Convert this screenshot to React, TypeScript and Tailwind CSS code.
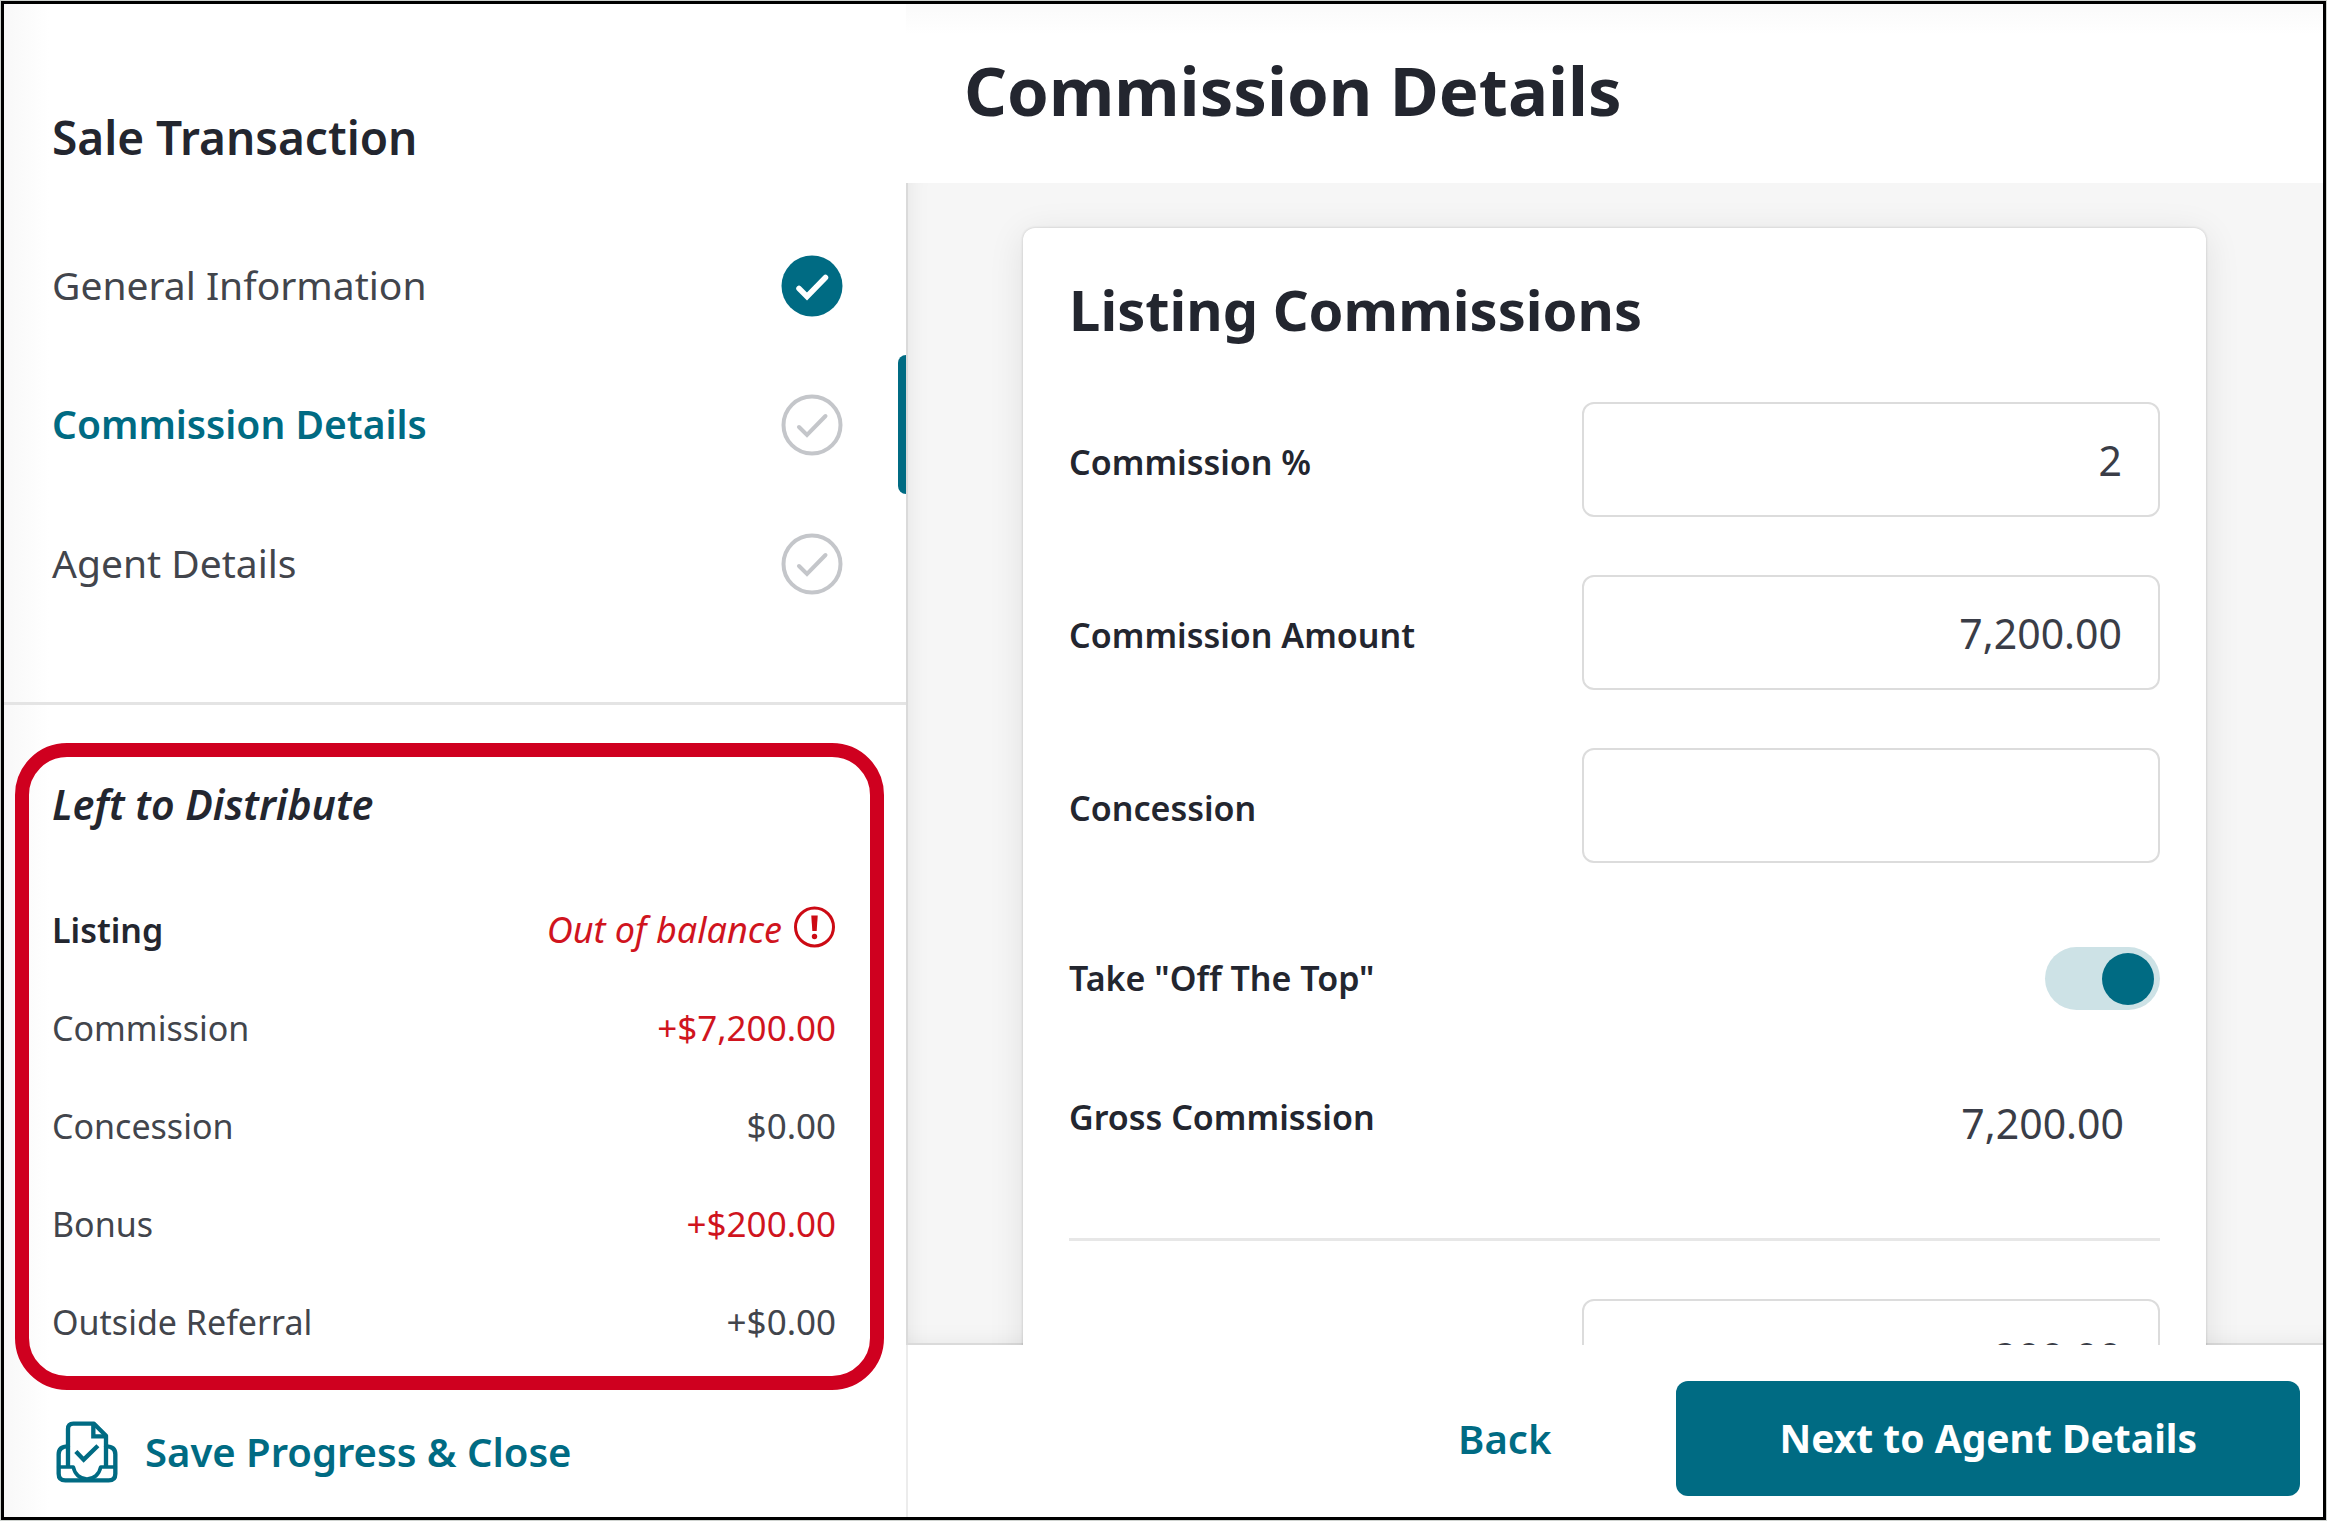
import { useState } from "react";

type Step = { label: string; state: "done" | "active" | "todo" };

const steps: Step[] = [
  { label: "General Information", state: "done" },
  { label: "Commission Details", state: "active" },
  { label: "Agent Details", state: "todo" },
];

const balances = [
  { label: "Commission", amount: "+$7,200.00", off: true },
  { label: "Concession", amount: "$0.00", off: false },
  { label: "Bonus", amount: "+$200.00", off: true },
  { label: "Outside Referral", amount: "+$0.00", off: false },
];

function StepCheck({ done }: { done: boolean }) {
  return (
    <svg className="size-[62px] shrink-0" viewBox="0 0 62 62" fill="none" aria-hidden="true">
      {done ? (
        <circle cx="31" cy="31" r="30.5" fill="#006b83" />
      ) : (
        <circle cx="31" cy="31" r="28.5" stroke="#c4c6ca" strokeWidth="4" />
      )}
      <path
        d={done ? "M18 33.500 L26 41.500 L44.500 22.500" : "M18 33 L26 41 L44.500 22"}
        stroke={done ? "#ffffff" : "#c4c6ca"}
        strokeWidth={done ? 5.5 : 4}
        strokeLinecap="round"
        strokeLinejoin="miter"
      />
    </svg>
  );
}

function AlertIcon() {
  return (
    <svg className="mb-1.5 size-[42px] shrink-0" viewBox="0 0 42 42" fill="none" aria-hidden="true">
      <circle cx="20.5" cy="21" r="19" stroke="#cc0a14" strokeWidth="3" />
      <path d="M17.300 9.500 H23.700 L22.700 25 H18.300 Z" fill="#cc0a14" />
      <circle cx="20.5" cy="30.500" r="2.700" fill="#cc0a14" />
    </svg>
  );
}

function SaveIcon() {
  return (
    <svg
      className="size-[64px] shrink-0"
      viewBox="45 59 192 192"
      fill="none"
      stroke="#006b83"
      strokeWidth="13"
      strokeLinecap="round"
      strokeLinejoin="round"
      aria-hidden="true"
    >
      <path d="M84 196 V86 Q84 70 100 70 H162 L198 106 V196" />
      <path d="M160 70 V108 H198" strokeLinecap="butt" strokeLinejoin="miter" />
      <path d="M112 158 L131 178 L169 141" strokeWidth="13" strokeLinejoin="miter" strokeLinecap="square" />
      <path d="M84 138 Q56 138 56 162 V220 Q56 240 76 240 H206 Q226 240 226 220 V162 Q226 138 198 138" />
      <path d="M56 200 H100 C104 222 120 236 141 236 C162 236 178 222 182 200 H226" strokeWidth="11" />
    </svg>
  );
}

function MoneyField({ id, label, initial }: { id: string; label: string; initial: string }) {
  const [value, setValue] = useState(initial);
  return (
    <div className="flex h-[115px] items-center justify-between">
      <label htmlFor={id} className="pt-1.5 text-[34px] font-semibold">
        {label}
      </label>
      <input
        id={id}
        type="text"
        value={value}
        onChange={(e) => setValue(e.target.value)}
        className="h-full w-[53%] rounded-xl border-2 border-[#dcdcdc] bg-white pr-9 pl-6 text-right text-[41px] text-[#3a3d47] outline-none focus:border-[#006b83]"
      />
    </div>
  );
}

export default function App() {
  const [offTheTop, setOffTheTop] = useState(true);
  const [bonus, setBonus] = useState("200.00");

  return (
    <div className="h-screen bg-[#cfd3d0] p-px font-['Noto_Sans',sans-serif] text-[#23262f]">
      <div className="flex h-full overflow-hidden border-[3px] border-black bg-white">
        <aside className="flex w-[38.9%] shrink-0 flex-col bg-linear-to-r from-[#f8f8f8] to-white to-[45px] pt-[103px]">
          <h2 className="pl-12 text-[46px] leading-[60px] font-semibold">Sale Transaction</h2>

          <nav className="mt-[49px]" aria-label="Transaction steps">
            {steps.map((step) => (
              <a
                key={step.label}
                href="#"
                className={
                  step.state === "active"
                    ? "relative flex h-[139px] items-center justify-between pr-[63px] pl-12 text-[39px] font-semibold text-[#006b83]"
                    : "relative flex h-[139px] items-center justify-between pr-[63px] pl-12 text-[39px] text-[#42454c]"
                }
              >
                {step.label}
                <StepCheck done={step.state === "done"} />
                {step.state === "active" && (
                  <span className="absolute inset-y-0 right-0 w-2 rounded-l-lg bg-[#006b83]" />
                )}
              </a>
            ))}
          </nav>

          <div className="mt-[69px] border-t-[3px] border-[#e4e4e4]" />

          <section className="mt-[38px] mr-[22px] ml-[11px] rounded-[52px] border-[14px] border-[#cf001f] pr-[34px] pb-[5px] pl-[23px]">
            <h3 className="mb-[26px] flex h-[98px] items-center pb-0.5 text-[41px] font-semibold italic">
              Left to Distribute
            </h3>
            <div className="flex h-[98px] items-center justify-between text-[34px]">
              <span className="font-semibold">Listing</span>
              <span className="flex items-center gap-3 text-[36px] text-[#d0141e] italic">
                Out of balance
                <AlertIcon />
              </span>
            </div>
            <dl>
              {balances.map((row) => (
                <div key={row.label} className="flex h-[98px] items-center justify-between text-[#42454c]">
                  <dt className="text-[34px]">{row.label}</dt>
                  <dd className={row.off ? "text-[35px] text-[#d0141e]" : "text-[35px]"}>{row.amount}</dd>
                </div>
              ))}
            </dl>
          </section>

          <button
            type="button"
            className="flex flex-1 items-center gap-[26px] pb-1 pl-[51px] text-left text-[40px] font-semibold text-[#006b83]"
          >
            <SaveIcon />
            Save Progress &amp; Close
          </button>
        </aside>

        <main className="flex min-w-0 flex-1 flex-col">
          <header className="flex h-[179px] shrink-0 items-center bg-linear-to-b from-[#fafafa] to-white to-[30px] pb-[7px] pl-[58px]">
            <h1 className="text-[67px] leading-none font-bold">Commission Details</h1>
          </header>

          <div className="min-h-0 flex-1 overflow-hidden bg-[#f6f6f6] px-[117px] pt-[45px] shadow-[inset_2px_0_0_#dadada,inset_0_-2px_0_#dadada,inset_24px_0_24px_-24px_#00000018,inset_0_-24px_24px_-24px_#00000014]">
            <section className="rounded-xl bg-white px-[46px] pt-[51px] pb-12 shadow-[0_0_3px_#00000030,0_6px_36px_#00000018]">
              <h2 className="text-[56px] leading-[60px] font-bold">Listing Commissions</h2>

              <form className="mt-[63px]" onSubmit={(e) => e.preventDefault()}>
                <div className="flex flex-col gap-[58px]">
                  <MoneyField id="commission-pct" label="Commission %" initial="2" />
                  <MoneyField id="commission-amount" label="Commission Amount" initial="7,200.00" />
                  <MoneyField id="concession" label="Concession" initial="" />
                  <div className="flex h-[115px] items-center justify-between">
                    <label htmlFor="off-the-top" className="text-[34px] font-semibold">
                      Take "Off The Top"
                    </label>
                    <input
                      id="off-the-top"
                      type="checkbox"
                      role="switch"
                      checked={offTheTop}
                      onChange={(e) => setOffTheTop(e.target.checked)}
                      className="flex h-[63px] w-[115px] appearance-none items-center rounded-full bg-[#cde2e6] px-[6px] before:size-[52px] before:rounded-full before:bg-[#8a9499] checked:justify-end checked:before:bg-[#006b83]"
                    />
                  </div>
                </div>

                <div className="mt-[53px] flex items-start justify-between">
                  <span className="text-[34px] leading-[56px] font-semibold">Gross Commission</span>
                  <output className="pr-9 text-[41px] leading-[68px] text-[#3a3d47]">7,200.00</output>
                </div>

                <hr className="mt-[81px] border-t-[3px] border-[#e7e7e7]" />

                <div className="mt-[58px] flex h-[115px] justify-end">
                  <input
                    type="text"
                    aria-label="Bonus"
                    value={bonus}
                    onChange={(e) => setBonus(e.target.value)}
                    className="h-full w-[53%] rounded-xl border-2 border-[#dcdcdc] bg-white pr-9 pl-6 text-right text-[41px] text-[#3a3d47] outline-none"
                  />
                </div>
              </form>
            </section>
          </div>

          <footer className="flex h-[172px] shrink-0 items-start justify-end border-l-2 border-[#ececec] pt-9 pr-[23px]">
            <button type="button" className="mr-[125px] h-[115px] text-[40px] font-semibold text-[#006b83]">
              Back
            </button>
            <button
              type="button"
              className="h-[115px] rounded-xl bg-[#006b83] px-[103px] text-[39px] font-bold text-white"
            >
              Next to Agent Details
            </button>
          </footer>
        </main>
      </div>
    </div>
  );
}
